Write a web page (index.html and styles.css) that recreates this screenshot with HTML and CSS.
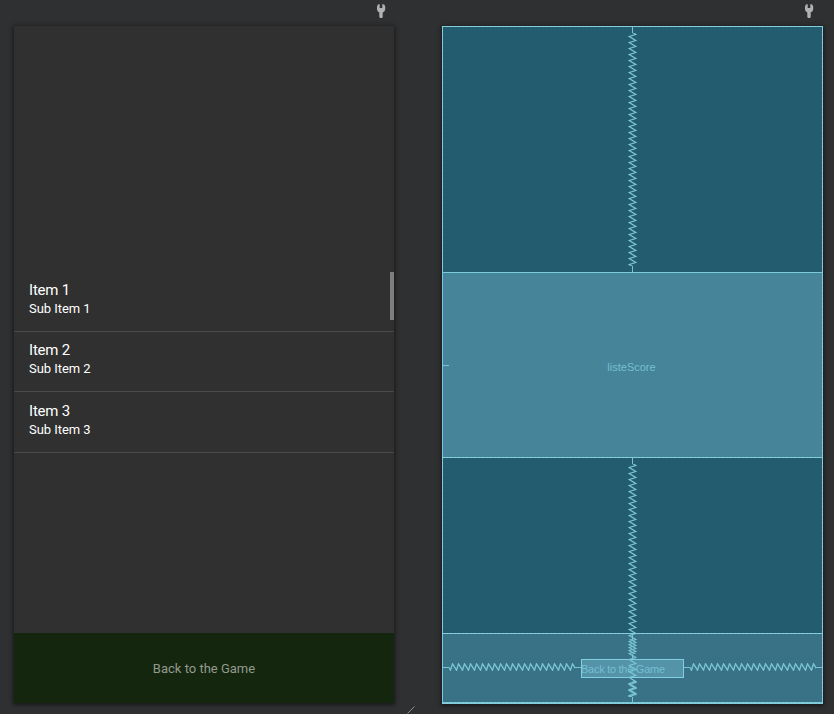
FILE: index.html
```html
<!DOCTYPE html>
<html lang="en">
<head>
<meta charset="utf-8">
<title>Layout editor</title>
<link rel="stylesheet" href="styles.css">
</head>
<body>
<main class="editor">
  <section class="surface">
    <header class="tools">
      <svg class="wrench" width="10" height="15" viewBox="-.5 0 10 15"><path d="M3.2 0V4h2.6V0L8 .8L8.7 2.8V5.5L8 7.3L6.2 8.6V13L5.6 14H3.6L2.8 13V8.6L1.2 7.3L.5 5.5V2.8L1.2 .8z"/></svg>
    </header>
    <div class="screen">
      <div class="list">
        <div class="item"><div class="title">Item 1</div><div class="sub">Sub Item 1</div></div>
        <div class="item"><div class="title">Item 2</div><div class="sub">Sub Item 2</div></div>
        <div class="item"><div class="title">Item 3</div><div class="sub">Sub Item 3</div></div>
        <div class="scrollbar"></div>
      </div>
      <div class="footer">Back to the Game</div>
    </div>
  </section>
  <svg class="grip" width="8" height="8" viewBox="0 0 8 8"><path d="M.5 7.5l7-7"/></svg>
  <section class="surface">
    <header class="tools">
      <svg class="wrench" width="10" height="15" viewBox="-.5 0 10 15"><path d="M3.2 0V4h2.6V0L8 .8L8.7 2.8V5.5L8 7.3L6.2 8.6V13L5.6 14H3.6L2.8 13V8.6L1.2 7.3L.5 5.5V2.8L1.2 .8z"/></svg>
    </header>
    <div class="blueprint">
      <div class="bp-list">listeScore</div>
      <div class="bp-footer"><div class="bp-button">Back to the Game</div></div>
      <svg class="constraints" width="381" height="678" viewBox="0 0 381 678">
        <defs>
          <pattern id="coil-v" x="186" y="7" width="9" height="6" patternUnits="userSpaceOnUse">
            <path class="coil" d="M1.2 -2.5L7.8 1.5L1.2 3.5L7.8 7.5"/>
          </pattern>
          <pattern id="coil-h" x="7" y="637" width="6" height="8" patternUnits="userSpaceOnUse">
            <path class="coil" d="M-2.5 .8L1.5 7.2L3.5 .8L7.5 7.2"/>
          </pattern>
          <pattern id="coil-h2" x="248" y="637" width="6" height="8" patternUnits="userSpaceOnUse">
            <path class="coil" d="M-2.5 .8L1.5 7.2L3.5 .8L7.5 7.2"/>
          </pattern>
          <pattern id="coil-mid" x="186" y="438" width="9" height="6" patternUnits="userSpaceOnUse">
            <path class="coil" d="M1.2 -2.5L7.8 1.5L1.2 3.5L7.8 7.5"/>
          </pattern>
          <pattern id="coil-alt" x="186" y="615" width="9" height="6" patternUnits="userSpaceOnUse">
            <path class="coil" d="M1.2 -2.5L7.8 1.5L1.2 3.5L7.8 7.5"/>
          </pattern>
          <pattern id="coil-low" x="186" y="655" width="9" height="6" patternUnits="userSpaceOnUse">
            <path class="coil" d="M1.2 -2.5L7.8 1.5L1.2 3.5L7.8 7.5"/>
          </pattern>
        </defs>
        <path class="line" d="M190.5 1v6M190.5 240v6M190.5 432v6M190.5 608v6M190.5 628v5M190.5 671v6M1 641.5h6M133 641.5h6M242 641.5h6M374 641.5h7M1 339.5h6"/>
        <rect x="186" y="7" width="9" height="233" fill="url(#coil-v)"/>
        <rect x="186" y="438" width="9" height="233" fill="url(#coil-mid)"/>
        <rect x="186" y="613" width="9" height="15" fill="url(#coil-alt)"/>
        <rect x="186" y="655" width="9" height="16" fill="url(#coil-low)"/>
        <rect x="7" y="637" width="126" height="8" fill="url(#coil-h)"/>
        <rect x="248" y="637" width="126" height="8" fill="url(#coil-h2)"/>
        <path class="edge" d="M0 .5h381M.5 0v678M380.5 0v678M0 246.5h381M0 431.5h381M0 607.5h381M0 676.5h381M0 677.5h381"/>
        <path class="dash" d="M0 .5h381M.5 0v246M.5 432v176M380.5 0v678M0 431.5h381M0 607.5h381M0 677.5h381"/>
      </svg>
    </div>
  </section>
</main>
</body>
</html>
```
FILE: styles.css
```css
* { box-sizing: border-box; }
body { margin: 0; background: #2f3032; }
.editor {
  display: flex;
  height: 714px;
  padding-left: 14px;
  overflow: hidden;
  font-family: Roboto, sans-serif;
}
.surface { width: 380px; flex: none; }
.surface:last-child { width: 381px; margin-left: 27px; }
.tools { display: flex; justify-content: flex-end; height: 26px; padding: 4px 8px 0 0; }
.surface:last-child .tools { padding-right: 9px; }
.wrench path { fill: #afb1b3; }
.grip { align-self: flex-end; margin-left: 13px; stroke: #8c8c8c; stroke-width: 1; }
.screen, .blueprint {
  display: flex;
  flex-direction: column;
  justify-content: flex-end;
  box-shadow: 0 1px 4px 1px rgba(0, 0, 0, .5);
}
.screen { height: 677px; background: #303030; }
.list { position: relative; height: 361px; }
.item {
  height: 60px;
  margin-bottom: .3px;
  padding: 9px 15px 0;
  border-bottom: 1px solid #4a4a4a;
  color: #fff;
}
.title { font-size: 15px; line-height: 19px; letter-spacing: -.2px; }
.sub { font-size: 13px; line-height: 18.6px; letter-spacing: -.05px; }
.scrollbar { position: absolute; right: 0; top: 0; width: 4px; height: 48px; background: #7e7e7e; }
.footer {
  display: flex;
  align-items: center;
  justify-content: center;
  height: 70px;
  background: #14260d;
  color: #929a8f;
  font-size: 13px;
}
.blueprint {
  position: relative;
  height: 678px;
  background: #235c6f;
  color: #75bfd2;
  font: 11px "Liberation Sans", Arial, sans-serif;
}
.bp-list {
  display: flex;
  align-items: center;
  justify-content: center;
  height: 185px;
  margin-bottom: 176px;
  padding: 4px 2px 0 0;
  background: #468499;
}
.bp-footer { height: 71px; padding: 26px 0 0 139px; background: #397287; }
.bp-button {
  width: 103px;
  height: 19px;
  border: 1px solid #81d0e2;
  background: #5493a8;
  line-height: 19px;
  letter-spacing: -.27px;
  text-indent: -1px;
  white-space: nowrap;
}
.constraints { position: absolute; inset: 0; fill: none; }
.coil { fill: none; stroke: #78c4d5; stroke-width: 1.3; }
.line { stroke: #78c4d5; }
.edge { stroke: #7bcadc; }
.dash { stroke: #a3d3dc; stroke-dasharray: 2 2; opacity: .5; }
```
